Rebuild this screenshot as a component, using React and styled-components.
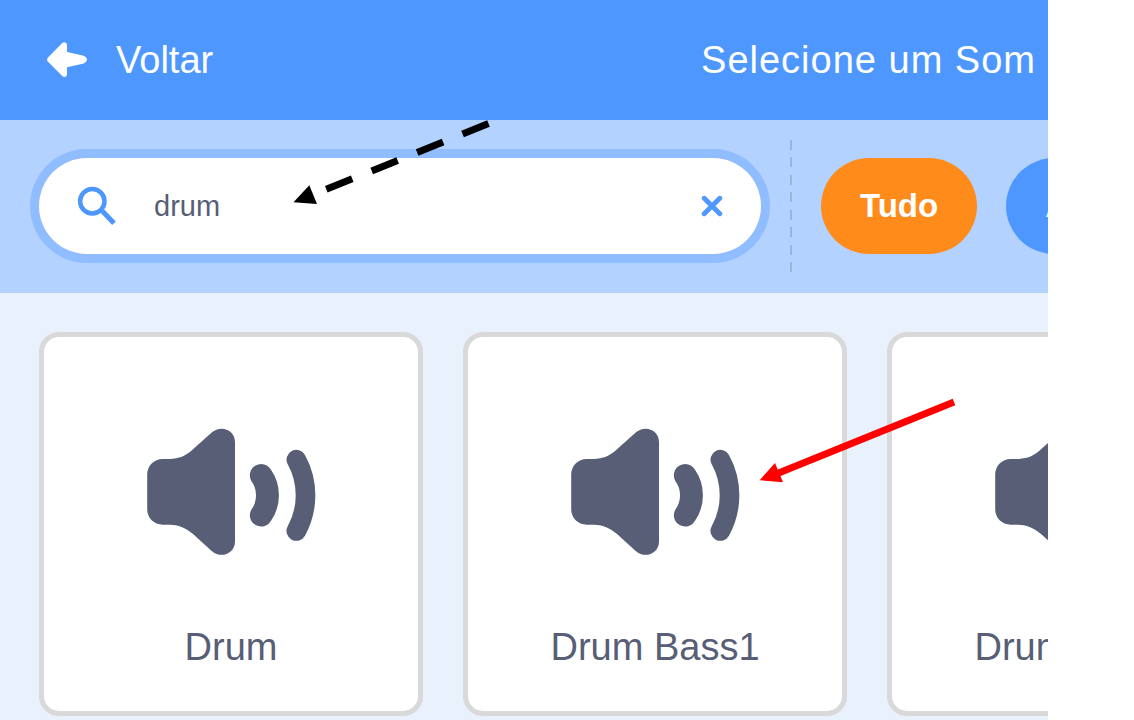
import React from "react";
import styled, { createGlobalStyle } from "styled-components";

const GlobalStyle = createGlobalStyle`
  * { box-sizing: border-box; }
  body {
    margin: 0;
    background: #fff;
    overflow-x: hidden;
    font-family: "Liberation Sans", Arial, sans-serif;
  }
  button, input, h1, h2 {
    margin: 0;
    padding: 0;
    border: 0;
    font: inherit;
  }
  button { cursor: pointer; }
  svg { display: block; flex: none; }
`;

const Library = styled.main`
  position: relative;
  display: flex;
  flex-direction: column;
  min-height: 100vh;
  margin-right: 86px;
  overflow: hidden;
  background: #e9f1fc;
`;

const Header = styled.header`
  display: flex;
  align-items: center;
  justify-content: space-between;
  height: 119px;
  padding: 0 12px 0 47px;
  background: #4d97ff;
  color: #fff;
  font-size: 38px;
  line-height: 44px;
`;

const BackButton = styled.button`
  display: flex;
  align-items: center;
  gap: 29px;
  background: none;
  color: inherit;
`;

const Title = styled.h1`
  letter-spacing: 1px;
  white-space: nowrap;
`;

const FilterBar = styled.div`
  display: flex;
  align-items: center;
  height: 174px;
  padding-left: 39px;
  border-top: 1px solid #4d97ff;
  padding-bottom: 1px;
  background: #b3d2ff;
`;

const SearchField = styled.label`
  display: flex;
  flex: 1;
  align-items: center;
  min-width: 0;
  height: 96px;
  padding: 0 38px;
  border-radius: 48px;
  background: #fff;
  box-shadow: 0 0 0 9px #90bdff;
`;

const SearchInput = styled.input`
  flex: 1;
  min-width: 0;
  margin: 0 20px 0 38px;
  outline: none;
  background: transparent;
  color: #575e75;
  font-size: 29px;
  line-height: 36px;
`;

const ClearButton = styled.button`
  background: none;
`;

const Divider = styled.div`
  display: flex;
  flex: none;
  flex-direction: column;
  justify-content: space-between;
  width: 2px;
  height: 133px;
  margin: 0 29px;
`;

const Dash = styled.span`
  height: 10px;
  background: #9ab5da;
`;

const Tags = styled.div`
  display: flex;
  flex: 0 0 227px;
  gap: 29px;
  overflow: hidden;
`;

const Tag = styled.button`
  flex: none;
  height: 96px;
  padding: 0 39px;
  border-radius: 48px;
  background: ${({ $active }) => ($active ? "#ff8c1a" : "#4d97ff")};
  color: #fff;
  font-size: 33px;
  font-weight: bold;
`;

const SoundGrid = styled.section`
  display: flex;
  gap: 40px;
  padding: 39px 0 4px 39px;
`;

const SoundCard = styled.article`
  display: flex;
  flex: 0 0 384px;
  flex-direction: column;
  align-items: center;
  gap: 70px;
  height: 384px;
  padding-top: 91px;
  border: 5px solid #d9d9d9;
  border-radius: 20px;
  background: #fff;
  color: #575e75;
`;

const SoundName = styled.h2`
  font-size: 38px;
  line-height: 44px;
  white-space: nowrap;
`;

const Annotations = styled.svg`
  position: absolute;
  top: 0;
  left: 0;
  pointer-events: none;
`;

function BackIcon() {
  return (
    <svg width="40" height="35" viewBox="0 0 40 35" fill="#fff" aria-hidden="true">
      <path d="M.8 15.800 15.200 1.100C17-.7 20 .2 20 3v7l15.800 3.400c5.500 1.200 5.500 7.200 0 8.400L20 25.300v7c0 2.500-3 3.500-4.800 1.600L.8 19.500C-.2 18.400-.2 17 .8 15.800Z" />
    </svg>
  );
}

function SearchIcon() {
  return (
    <svg width="39" height="40" viewBox="0 0 39 40" fill="none" stroke="#4d97ff" aria-hidden="true">
      <circle cx="15.300" cy="15.300" r="12.200" strokeWidth="4.500" />
      <path d="M25.500 25.200 37 37.200" strokeWidth="5" />
      <path d="M23 23 27 27" strokeWidth="3" />
    </svg>
  );
}

function ClearIcon() {
  return (
    <svg width="22" height="22" viewBox="0 0 22 22" stroke="#4d97ff" strokeWidth="4.800" strokeLinecap="round" aria-hidden="true">
      <path d="M3.200 3.200 18.800 18.800M18.800 3.200 3.200 18.800" />
    </svg>
  );
}

function SpeakerIcon() {
  return (
    <svg width="169" height="127" viewBox="0 0 169 127" fill="#575e75" aria-hidden="true">
      <path d="M15.700 31C27 31.300 35 30.500 43.500 23.500L64.700 4.500C73.500-3.500 88 1.500 88 14V113.500C88 126 73.500 131 64.700 123L46 106C38 99.500 31 96.700 23 96.700H15.700C7 96.700.2 90 .2 81.300V46.500C.2 38 7 31 15.700 31Z" />
      <path d="M124 41.800A45 45 0 0 1 124 92.800A11.300 11.300 0 0 1 104.300 81.700A24 24 0 0 0 104.300 53A11.300 11.300 0 0 1 124 41.800Z" />
      <path d="M158 27A84 84 0 0 1 158 107.700A9.800 9.800 0 0 1 140.700 98.300A64 64 0 0 0 140.700 36.300A9.800 9.800 0 0 1 158 27Z" />
    </svg>
  );
}

const sounds = ["Drum", "Drum Bass1", "Drum Bass2"];

export default function App() {
  return (
    <>
      <GlobalStyle />
      <Library>
        <Header>
          <BackButton type="button">
            <BackIcon />
            Voltar
          </BackButton>
          <Title>Selecione um Som</Title>
        </Header>
        <FilterBar>
          <SearchField>
            <SearchIcon />
            <SearchInput type="text" defaultValue="drum" aria-label="Buscar" />
            <ClearButton type="button" aria-label="Limpar">
              <ClearIcon />
            </ClearButton>
          </SearchField>
          <Divider role="separator">
            {Array.from({ length: 8 }, (_, i) => (
              <Dash key={i} />
            ))}
          </Divider>
          <Tags>
            <Tag type="button" $active>Tudo</Tag>
            <Tag type="button">Animais</Tag>
          </Tags>
        </FilterBar>
        <SoundGrid>
          {sounds.map((name) => (
            <SoundCard key={name}>
              <SpeakerIcon />
              <SoundName>{name}</SoundName>
            </SoundCard>
          ))}
        </SoundGrid>
        <Annotations width="1000" height="500" viewBox="0 0 1000 500" aria-hidden="true">
          <path d="M488.500 123.600 326 189.400" stroke="#000" strokeWidth="7" strokeDasharray="28 21" />
          <path d="M293.500 202.300 309.300 185.300 317 204Z" fill="#000" />
          <path d="M954 402 778 473.300" stroke="#f00" strokeWidth="7" />
          <path d="M759.700 480.200 775 463 783 482.200Z" fill="#f00" />
        </Annotations>
      </Library>
    </>
  );
}
